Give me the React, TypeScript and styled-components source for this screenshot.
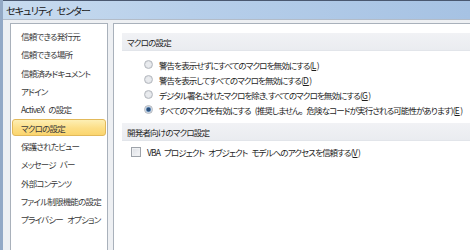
import React from "react";
import styled, { createGlobalStyle } from "styled-components";

const GlobalStyle = createGlobalStyle`
  html, body {
    margin: 0;
    padding: 0;
    background: #eef0f3;
  }
`;

const Window = styled.div`
  width: 470px;
  height: 250px;
  overflow: hidden;
  display: flex;
  flex-direction: column;
  font-family: "Noto Sans CJK JP", "Noto Sans", sans-serif;
  font-feature-settings: "palt";
  word-spacing: 3px;
  color: #1e1e1e;
  background: #eef0f3;
  border-left: 3px solid #93a9c6;
  box-sizing: border-box;
`;

const TitleBar = styled.div`
  height: 18px;
  flex: none;
  display: flex;
  align-items: center;
  padding-left: 3px;
  font-size: 10px;
  letter-spacing: -0.9px;
  color: #161616;
  border-top: 1px solid #4a5870;
  background: linear-gradient(90deg, #c8dbef 0%, #b7cfea 40%, #a6c2e3 100%);
  border-bottom: 1px solid #b3bcc8;
`;

const Body = styled.div`
  flex: 1;
  display: flex;
  gap: 5px;
  padding: 3px 0 0 7px;
  min-height: 0;
`;

const Sidebar = styled.ul`
  list-style: none;
  margin: 0;
  width: 98px;
  flex: none;
  display: flex;
  flex-direction: column;
  box-sizing: border-box;
  padding: 3px 1px 0;
  background: #fff;
  border: 1px solid #a9b1bb;
  border-bottom: none;
`;

const NavItem = styled.li<{ $active?: boolean }>`
  height: 16.3px;
  flex: none;
  margin: 1px 0;
  padding-left: 8px;
  display: flex;
  align-items: center;
  font-size: 8.5px;
  letter-spacing: -0.8px;
  white-space: nowrap;
  color: #3a3a3a;
  border-radius: 3px;
  box-sizing: border-box;
  border: 1px solid ${(p) => (p.$active ? "#e2b95a" : "transparent")};
  background: ${(p) =>
    p.$active ? "linear-gradient(#fdefb4 0%, #fcde86 55%, #fbd56e 100%)" : "transparent"};
`;

const Main = styled.section`
  flex: 1;
  background: #fff;
  border: 1px solid #a9b1bb;
  border-right: none;
  border-bottom: none;
  padding: 9px 0 0 8px;
  box-sizing: border-box;
`;

const SectionHeader = styled.div`
  height: 17px;
  display: flex;
  align-items: center;
  padding-left: 5px;
  font-size: 8.5px;
  letter-spacing: -0.8px;
  color: #1e1e1e;
  background: linear-gradient(#f1f2f5, #eaecf0);
  border-bottom: 1px solid #e2e5ea;
`;

const OptionList = styled.div<{ $top: number; $indent: number }>`
  display: flex;
  flex-direction: column;
  padding: ${(p) => p.$top}px 0 6px ${(p) => p.$indent}px;
`;

const Option = styled.label`
  height: 15px;
  display: flex;
  align-items: center;
  gap: 6px;
  font-size: 8.5px;
  letter-spacing: -0.9px;
  color: #1e1e1e;
  white-space: nowrap;
`;

const Radio = styled.span<{ $checked?: boolean }>`
  width: 9px;
  height: 9px;
  border-radius: 50%;
  flex: none;
  box-sizing: border-box;
  border: 1px solid #b4b8be;
  background: ${(p) =>
    p.$checked
      ? "radial-gradient(circle, #2a4f7a 0 1.6px, #6f95be 2.2px, #dfe5ec 3.2px)"
      : "radial-gradient(circle, #e9ebee 0 2px, #dadde2 3.5px)"};
`;

const Check = styled.span`
  width: 10px;
  height: 10px;
  flex: none;
  box-sizing: border-box;
  border: 1px solid #9ea3aa;
  background: linear-gradient(135deg, #dcdfe4, #f6f7f9);
  box-shadow: inset 0 0 0 1px #eef0f2;
`;

const Key = styled.u`
  text-decoration: underline;
  letter-spacing: 0;
  margin-right: 0.5px;
`;

const navItems = [
  "信頼できる発行元",
  "信頼できる場所",
  "信頼済みドキュメント",
  "アドイン",
  "ActiveX の設定",
  "マクロの設定",
  "保護されたビュー",
  "メッセージ バー",
  "外部コンテンツ",
  "ファイル制限機能の設定",
  "プライバシー オプション",
];

const macroOptions: { text: string; key: string }[] = [
  { text: "警告を表示せずにすべてのマクロを無効にする", key: "L" },
  { text: "警告を表示してすべてのマクロを無効にする", key: "D" },
  { text: "デジタル署名されたマクロを除き、すべてのマクロを無効にする", key: "G" },
  {
    text: "すべてのマクロを有効にする (推奨しません。 危険なコードが実行される可能性があります)",
    key: "E",
  },
];

export default function App() {
  return (
    <>
      <GlobalStyle />
      <Window>
        <TitleBar>セキュリティ センター</TitleBar>
        <Body>
          <Sidebar>
            {navItems.map((item) => (
              <NavItem key={item} $active={item === "マクロの設定"}>
                {item}
              </NavItem>
            ))}
          </Sidebar>
          <Main>
            <SectionHeader>マクロの設定</SectionHeader>
            <OptionList $top={6} $indent={22}>
              {macroOptions.map((o, i) => (
                <Option key={o.key}>
                  <Radio $checked={i === 3} />
                  <span>
                    {o.text}(<Key>{o.key}</Key>)
                  </span>
                </Option>
              ))}
            </OptionList>
            <SectionHeader>開発者向けのマクロ設定</SectionHeader>
            <OptionList $top={3} $indent={9}>
              <Option>
                <Check />
                <span>
                  VBA プロジェクト オブジェクト モデルへのアクセスを信頼する(<Key>V</Key>)
                </span>
              </Option>
            </OptionList>
          </Main>
        </Body>
      </Window>
    </>
  );
}
